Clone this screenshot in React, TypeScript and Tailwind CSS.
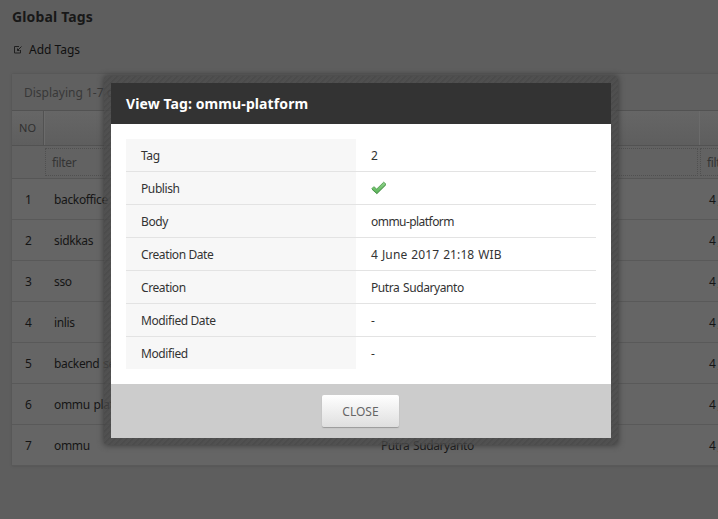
import React from "react";

const rows = ["backoffice", "sidkkas", "sso", "inlis", "backend search", "ommu platform", "ommu"];

const details: [string, React.ReactNode, string][] = [
  ["Tag", "2", ""],
  ["Publish", <Check key="check" />, ""],
  ["Body", "ommu-platform", "tracking-[-0.55px]"],
  ["Creation Date", "4 June 2017 21:18 WIB", "tracking-[0.1px] [word-spacing:0.8px]"],
  ["Creation", "Putra Sudaryanto", "tracking-[-0.42px] [word-spacing:1px]"],
  ["Modified Date", "-", ""],
  ["Modified", "-", ""],
];

function Check() {
  return (
    <svg width="16" height="14" viewBox="0 0 16 14" className="-mt-[3px] block">
      <defs>
        <linearGradient id="leaf" x1="0" y1="0" x2="0" y2="1">
          <stop offset="0" stopColor="#90d38c" />
          <stop offset="1" stopColor="#58b356" />
        </linearGradient>
      </defs>
      <path d="M.8 7.8 2.8 5.700 5.700 8.100 12.700 1.200 15 3.300 5.900 12.400Z" fill="url(#leaf)" stroke="#5ba558" strokeWidth="1" strokeLinejoin="round" />
      <path d="M1.100 8.400 5.900 12.700 14.800 3.900" fill="none" stroke="#3b873b" strokeWidth=".7" />
    </svg>
  );
}

const grid = "grid grid-cols-[32px_327px_329px_120px]";

function Page() {
  return (
    <div className="w-[718px] pl-3">
      <h1 className="h-[42px] pt-[7px] text-[14px] leading-5 font-bold tracking-[0.15px] text-[#181818]">Global Tags</h1>
      <a className="flex h-8 items-start text-[12px] leading-4 text-[#101010]">
        <svg width="8" height="8" viewBox="0 0 8 8" className="mt-[4px] ml-[2px] mr-[7px] shrink-0" fill="none" stroke="#202020">
          <path d="M5 .5H.5v6.500h6V4M7.500 .5 3.500 4.500M3.500 2.500v2h2" />
        </svg>
        Add Tags
      </a>
      <div className="w-[808px] bg-[#656565] shadow-[0_0_2px_#505050]">
        <div className="flex h-[36px] items-center bg-[#606060] px-3 pt-[2px] text-[12px] text-[#383838]">Displaying 1-7 of 7 results.</div>
        <div className={`${grid} h-[36px] border-y border-[#525252] bg-linear-to-b from-[#666666] to-[#5e5e5e] text-[11px] text-[#303030]`}>
          <div className="flex items-center justify-center border-r border-[#525252]">NO</div>
          <div className="border-x border-r-[#525252] border-l-[#6b6b6b]" />
          <div className="-ml-px border-x border-r-[#525252] border-l-[#6b6b6b]" />
          <div className="-ml-px border-l border-[#6b6b6b]" />
        </div>
        <div className={`${grid} h-[33px] border-b border-[#565656] bg-[#626262] text-[12px] text-[#343434]`}>
          <div />
          {[0, 1, 2].map((i) => (
            <div key={i} className="mr-[2px] my-[2px] ml-px flex items-center border border-dotted border-[#505050] pt-px pl-[6px] tracking-[-0.35px] last:ml-0">filter</div>
          ))}
        </div>
        {rows.map((name, i) => (
          <div key={name} className={`${grid} h-[41px] items-center border-b border-[#595959] pt-[2px] text-[12px] text-[#151515]`}>
            <div className="pl-px text-center">{i + 1}</div>
            <div className="pl-[10px] tracking-[-0.35px] [word-spacing:1px]">{name}</div>
            <div className="pl-[10px] tracking-[-0.42px] [word-spacing:1px]">Putra Sudaryanto</div>
            <div className="pl-[9px] whitespace-nowrap">4 June 2017</div>
          </div>
        ))}
      </div>
    </div>
  );
}

function Modal() {
  return (
    <div className="absolute top-[76px] left-[104px] w-[514px] rounded-[3px] bg-[repeating-linear-gradient(135deg,#454545c8_0px,#454545c8_1.500px,#4b4b4bc8_2.500px,#4b4b4bc8_4.243px)] p-[7px] shadow-[0_0_6px_#383838]">
      <div className="bg-white">
        <h2 className="flex h-[41px] items-center bg-[#333333] px-[15px] text-[14px] font-bold tracking-[0.1px] text-white">View Tag: ommu-platform</h2>
        <div className="h-[260px] p-[15px]">
          {details.map(([label, value, spacing], i) => (
            <div key={label} className={`grid grid-cols-[230px_240px] text-[12px] text-[#333333] ${i < 6 ? "h-[33px] border-b border-[#e3e3e3]" : "h-[32px]"}`}>
              <div className="flex items-center bg-[#f7f7f7] px-[15px] pt-[2px] tracking-[-0.4px]">{label}</div>
              <div className={`flex items-center px-[15px] pt-[2px] ${spacing}`}>{value}</div>
            </div>
          ))}
        </div>
        <div className="flex h-[54px] justify-center bg-[#cccccc] pt-[11px]">
          <button className="mr-px h-[32px] w-[77px] rounded-[2px] bg-linear-to-b from-white to-[#dfdfdf] pt-[2px] text-[12px] text-[#666666] shadow-[0_1px_1px_#999999]">CLOSE</button>
        </div>
      </div>
    </div>
  );
}

export default function App() {
  return (
    <div className="relative h-[519px] w-[718px] overflow-hidden bg-[#5e5e5e] font-['Noto_Sans',sans-serif]">
      <Page />
      <Modal />
    </div>
  );
}
